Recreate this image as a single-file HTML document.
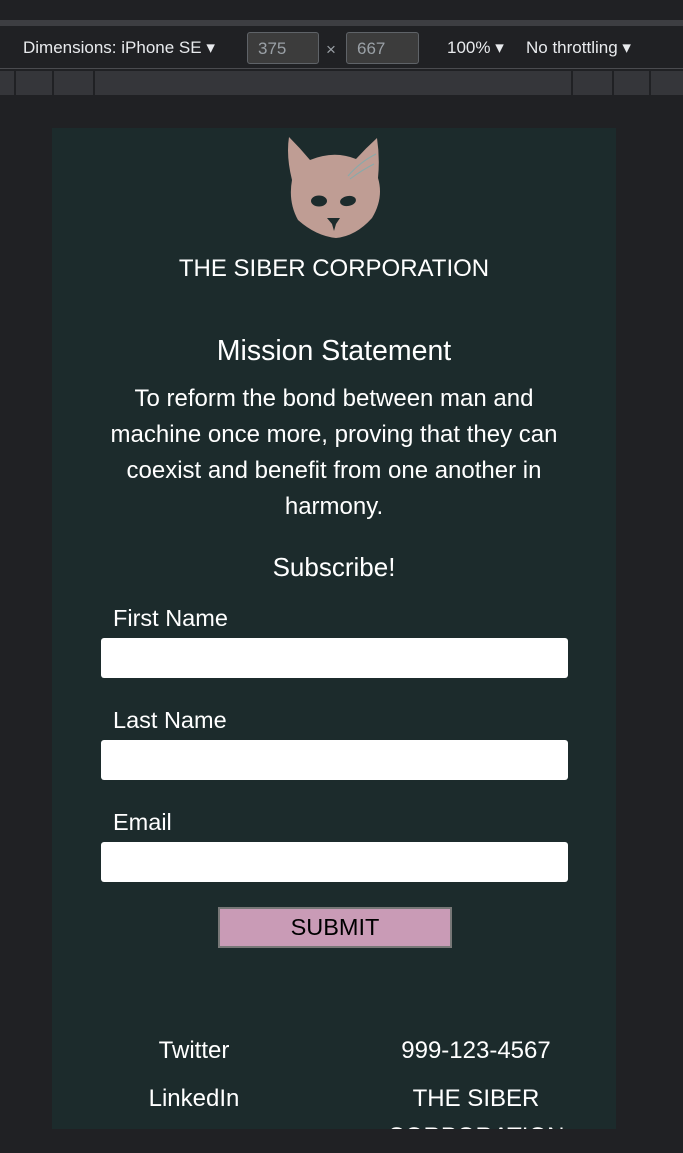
<!DOCTYPE html>
<html><head><style>
*{margin:0;padding:0;box-sizing:border-box}
body{width:683px;height:1153px;background:#202124;font-family:"Liberation Sans",sans-serif;position:relative;overflow:hidden}
.a{position:absolute}
.t{color:#fff;text-align:center}
.in{position:absolute;left:101px;width:467px;height:40px;background:#fff;border-radius:3px}
.lbl{position:absolute;left:113px;color:#fff;font-size:23.5px}
</style></head><body>
<div class="a" style="left:0;top:20px;width:683px;height:6px;background:#3d3e42"></div>
<div class="a" style="left:0;top:68px;width:683px;height:1px;background:#4a4b4f"></div>
<div class="a" style="left:0;top:71px;width:683px;height:24px;background:#35363a"></div>
<div class="a" style="left:14px;top:71px;width:2px;height:24px;background:#202124"></div>
<div class="a" style="left:52px;top:71px;width:2px;height:24px;background:#202124"></div>
<div class="a" style="left:93px;top:71px;width:2px;height:24px;background:#202124"></div>
<div class="a" style="left:571px;top:71px;width:2px;height:24px;background:#202124"></div>
<div class="a" style="left:612px;top:71px;width:2px;height:24px;background:#202124"></div>
<div class="a" style="left:649px;top:71px;width:2px;height:24px;background:#202124"></div>
<div class="a" style="left:23px;top:38px;color:#e8eaed;font-size:17px">Dimensions: iPhone SE ▾</div>
<div class="a" style="left:247px;top:32px;width:72px;height:32px;border:1px solid #5f6368;background:#3c3c3c;border-radius:3px;color:#9aa0a6;font-size:17px;padding:6px 10px">375</div>
<div class="a" style="left:326px;top:40px;color:#9aa0a6;font-size:17px">×</div>
<div class="a" style="left:346px;top:32px;width:73px;height:32px;border:1px solid #5f6368;background:#3c3c3c;border-radius:3px;color:#9aa0a6;font-size:17px;padding:6px 10px">667</div>
<div class="a" style="left:447px;top:38px;color:#e8eaed;font-size:17px">100% ▾</div>
<div class="a" style="left:526px;top:38px;color:#e8eaed;font-size:17px">No throttling ▾</div>

<div class="a" style="left:52px;top:128px;width:564px;height:1001px;background:#1c2b2c;overflow:hidden">
<svg class="a" style="left:234px;top:8px" width="96" height="104" viewBox="0 0 96 104">
<path d="M3 1 Q14 12 24 24 Q48 14 70 23 Q80 12 91 2 Q94 22 92 42 Q98 62 86 82 Q70 100 50 102 Q30 100 12 84 Q2 66 6 44 Q0 20 3 1Z" fill="#bf9d94"/>
<path d="M62 40 Q74 26 90 18 M64 43 Q76 34 88 28" stroke="#8aa" stroke-width="1" fill="none"/>
<ellipse cx="33" cy="65" rx="8" ry="5.5" fill="#1c2b2c"/>
<ellipse cx="62" cy="65" rx="8" ry="5" fill="#1c2b2c" transform="rotate(-10 62 65)"/>
<path d="M41 82 L54 82 L50 88 L48 95 L46 88Z" fill="#1c2b2c"/>
</svg>
<div class="a t" style="left:0;width:564px;top:127px;font-size:24px">THE SIBER CORPORATION</div>
<div class="a t" style="left:0;width:564px;top:207px;font-size:28.5px">Mission Statement</div>
<div class="a t" style="left:42px;width:480px;top:253px;font-size:24px;line-height:36px">To reform the bond between man and machine once more, proving that they can coexist and benefit from one another in harmony.</div>
<div class="a t" style="left:0;width:564px;top:424px;font-size:26px">Subscribe!</div>
<div class="a t" style="left:0;width:284px;top:909px;font-size:24px">Twitter</div>
<div class="a t" style="left:0;width:284px;top:957px;font-size:24px">LinkedIn</div>
<div class="a t" style="left:284px;width:280px;top:909px;font-size:24px">999-123-4567</div>
<div class="a t" style="left:294px;width:260px;top:952px;font-size:24px;line-height:38px">THE SIBER CORPORATION</div>
</div>
<div class="lbl" style="top:605px">First Name</div>
<div class="in" style="top:638px"></div>
<div class="lbl" style="top:707px">Last Name</div>
<div class="in" style="top:740px"></div>
<div class="lbl" style="top:809px">Email</div>
<div class="in" style="top:842px"></div>
<div class="a" style="left:218px;top:907px;width:234px;height:41px;background:#c99bb6;border:2px solid #777;color:#000;font-size:23.5px;text-align:center;line-height:37px">SUBMIT</div>
</body></html>
